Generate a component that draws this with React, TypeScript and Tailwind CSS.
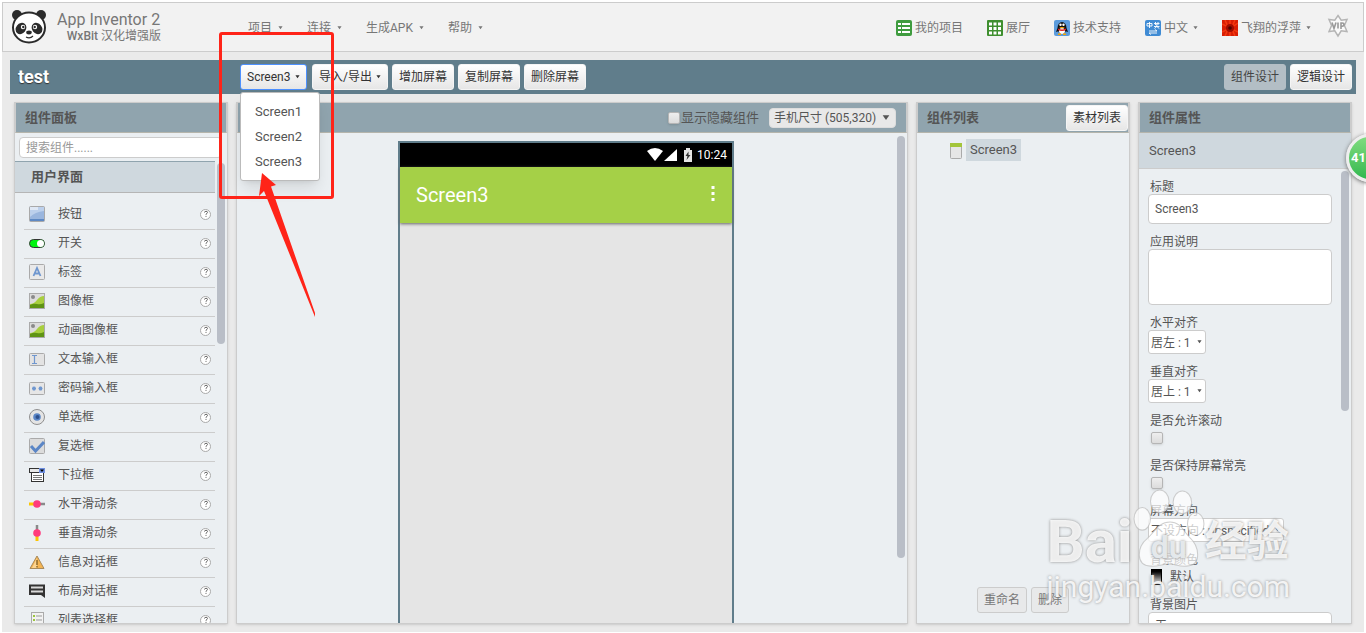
import type { ReactNode } from 'react'
import clsx from 'clsx'

const screens = ['Screen1', 'Screen2', 'Screen3']

const menus = ['项目', '连接', '生成APK', '帮助']

const palette = [
  { name: '按钮', icon: 'button' },
  { name: '开关', icon: 'switch' },
  { name: '标签', icon: 'label' },
  { name: '图像框', icon: 'image' },
  { name: '动画图像框', icon: 'image' },
  { name: '文本输入框', icon: 'textbox' },
  { name: '密码输入框', icon: 'password' },
  { name: '单选框', icon: 'radio' },
  { name: '复选框', icon: 'checkbox' },
  { name: '下拉框', icon: 'spinner' },
  { name: '水平滑动条', icon: 'hslider' },
  { name: '垂直滑动条', icon: 'vslider' },
  { name: '信息对话框', icon: 'notifier' },
  { name: '布局对话框', icon: 'dialog' },
  { name: '列表选择框', icon: 'listpicker' },
]

const paletteIcons: Record<string, ReactNode> = {
  button: (
    <>
      <rect x="0.5" y="0.5" width="15" height="15" rx="1" fill="#9ab6de" stroke="#a9a9a9" />
      <path d="M1 1h14v4Q6 6 1 11z" fill="#bcd0ec" />
      <path d="M1 1h8v3H1z" fill="#dfe8f5" />
      <path d="M1 13h14v2H1z" fill="#5e89c4" />
    </>
  ),
  switch: (
    <>
      <rect x="0.5" y="4.5" width="15" height="8" rx="4" fill="#00f410" stroke="#333" />
      <circle cx="11.5" cy="8.5" r="3.5" fill="#fff" />
    </>
  ),
  label: (
    <>
      <rect x="0.5" y="0.5" width="15" height="15" rx="1" fill="#e9e9e9" stroke="#aaa" />
      <path d="M4.5 12L8 4l3.500 8M5.800 9.500h4.400" fill="none" stroke="#6f97cf" strokeWidth="1.800" />
    </>
  ),
  image: (
    <>
      <rect x="0.5" y="0.5" width="15" height="15" fill="#dcdcdc" stroke="#aaa" />
      <circle cx="4" cy="4" r="2" fill="#8a8a8a" />
      <path d="M1 11Q5 11 8 7t7-4v12H1z" fill="#a8cf3e" />
      <path d="M1 12q4-2 7-1t7-1v5H1z" fill="#5f9414" />
    </>
  ),
  textbox: (
    <>
      <rect x="0.5" y="2.500" width="15" height="12" rx="1" fill="#e3e3e3" stroke="#aaa" />
      <path d="M3 4.500h5M3 12.500h5M5.500 4.500v8" fill="none" stroke="#6f97cf" strokeWidth="1.200" />
    </>
  ),
  password: (
    <>
      <rect x="0.5" y="2.500" width="15" height="12" rx="1" fill="#e6e6e6" stroke="#aaa" />
      <path
        d="M5 6.500v4M3 8.500h4M3.600 7l2.800 3M6.400 7l-2.800 3M11.500 6.500v4M9.500 8.500h4M10.100 7l2.800 3M12.900 7l-2.800 3"
        stroke="#6f97cf"
        strokeWidth="1.100"
      />
    </>
  ),
  radio: (
    <>
      <circle cx="8" cy="8" r="7.500" fill="#e4e4e4" stroke="#8f8f8f" />
      <circle cx="8" cy="8" r="3.800" fill="#5b86c6" />
      <circle cx="8.500" cy="8" r="2" fill="#2c4f8c" />
    </>
  ),
  checkbox: (
    <>
      <rect x="0.5" y="0.5" width="15" height="15" rx="1" fill="#dcdcdc" stroke="#aaa" />
      <path d="M2 8l4.500 5L15 4" fill="none" stroke="#5b86c6" strokeWidth="3" />
    </>
  ),
  spinner: (
    <>
      <rect x="2.500" y="4.500" width="12" height="10" fill="#fff" stroke="#333" />
      <rect x="0.5" y="1.500" width="15" height="4" fill="#e8e8e8" stroke="#333" />
      <rect x="10" y="1" width="6" height="5" fill="#6f8fe0" />
      <path d="M11 2.500h4l-2 2.500z" fill="#000" />
      <path d="M4 8.500h9M4 10.500h9M4 12.500h9" stroke="#777" />
    </>
  ),
  hslider: (
    <>
      <path d="M0 8h8" stroke="#fdc500" strokeWidth="3" />
      <path d="M8 8h8" stroke="#8a8a8a" strokeWidth="2.500" />
      <circle cx="8" cy="8" r="3.800" fill="#ff3b7d" />
    </>
  ),
  vslider: (
    <>
      <path d="M8 0v8" stroke="#8a8a8a" strokeWidth="2.500" />
      <path d="M8 8v8" stroke="#fdc500" strokeWidth="3" />
      <circle cx="8" cy="8" r="3.800" fill="#ff3b7d" />
    </>
  ),
  notifier: (
    <>
      <path d="M8 2l7 12.500H1z" fill="#f5b553" stroke="#a88a5c" strokeLinejoin="round" />
      <path d="M8 4v10H3z" fill="#fbd492" />
      <path d="M8 6v5M8 12v1.500" stroke="#8f6a2b" strokeWidth="1.500" />
    </>
  ),
  dialog: (
    <>
      <path d="M0 1.500h16V15l-4-3H0z" fill="#333" />
      <path d="M2 3.500h12v2H2zM2 7.500h12v2H2z" fill="#d9d9d9" />
    </>
  ),
  listpicker: (
    <>
      <rect x="2.500" y="0.5" width="12" height="15" fill="#f2f2f2" stroke="#aaa" />
      <path d="M4 4h2M4 8h2M4 12h2" stroke="#9bc53d" strokeWidth="2" />
      <path d="M7 4h6M7 8h6M7 12h6" stroke="#999" />
    </>
  ),
}

function Caret({ className }: { className?: string }) {
  return (
    <svg viewBox="0 0 6 4" className={clsx(className ?? 'h-1 w-[5px]', 'shrink-0')} aria-hidden="true">
      <path d="M0.5 0h5L3 3.500z" fill="currentColor" />
    </svg>
  )
}

function Button({ children, className }: { children: ReactNode; className?: string }) {
  return (
    <button
      type="button"
      className={clsx(
        'flex h-[26px] shrink-0 items-center rounded-[3px] border px-1.5 text-xs whitespace-nowrap',
        className ?? 'border-[#f4f4f4] bg-linear-to-b from-white to-[#e6e6e6] text-[#333]'
      )}
    >
      {children}
    </button>
  )
}

function Panel({ title, extra, className, children }: { title?: string; extra?: ReactNode; className: string; children: ReactNode }) {
  return (
    <section className={clsx('flex min-h-0 flex-col overflow-hidden border border-[#ccc] bg-[#ebeff2] shadow-sm', className)}>
      <div className="flex h-[30px] shrink-0 items-center justify-between border-x border-b border-x-[#ccc] border-b-[#b5b5ac] bg-[#90a4ae] pl-[9px]">
        <h2 className="text-[13px] font-bold">{title}</h2>
        {extra}
      </div>
      {children}
    </section>
  )
}

function Scrollbar({ className }: { className: string }) {
  return <div className={clsx('w-2 shrink-0 rounded-full bg-[#b9bec7]', className)} />
}

function Tick({ id }: { id: string }) {
  return (
    <input
      id={id}
      type="checkbox"
      className="block size-3 shrink-0 appearance-none rounded-[2px] border border-[#b5b5b5] bg-linear-to-b from-[#eee] to-[#dcdcdc] shadow-sm"
    />
  )
}

function Field({ id, label, children }: { id: string; label: string; children: ReactNode }) {
  return (
    <div>
      <label htmlFor={id} className="block h-4 pt-px pl-0.5 text-xs leading-4">
        {label}
      </label>
      {children}
    </div>
  )
}

function Select({ id, value, className }: { id: string; value: string; className: string }) {
  return (
    <div className={clsx('relative', className)}>
      <select
        id={id}
        className="block h-6 w-full appearance-none rounded-[3px] border border-[#ccc] bg-white pt-px pr-3 pl-0.5 text-xs"
      >
        <option>{value}</option>
      </select>
      <Caret className="pointer-events-none absolute top-2.5 right-1 h-1 w-[5px]" />
    </div>
  )
}

function Panda() {
  return (
    <svg viewBox="0 0 36 36" className="-mt-0.5 size-9" aria-hidden="true">
      <circle cx="6" cy="6" r="5" fill="#2b2b2b" />
      <circle cx="30" cy="6" r="5" fill="#2b2b2b" />
      <ellipse cx="18" cy="18.500" rx="16" ry="15" fill="#fff" stroke="#2b2b2b" strokeWidth="2" />
      <ellipse cx="10" cy="19.500" rx="5" ry="6" transform="rotate(38 10 19.500)" fill="#2b2b2b" />
      <ellipse cx="26" cy="19.500" rx="5" ry="6" transform="rotate(-38 26 19.500)" fill="#2b2b2b" />
      <circle cx="12" cy="18" r="2.200" fill="#fff" />
      <circle cx="24" cy="18" r="2.200" fill="#fff" />
      <circle cx="12.300" cy="18" r="1.200" fill="#2b2b2b" />
      <circle cx="23.700" cy="18" r="1.200" fill="#2b2b2b" />
      <ellipse cx="18" cy="23.500" rx="2.800" ry="1.900" fill="#2b2b2b" />
      <path d="M15 28q4 2 7-1" fill="none" stroke="#2b2b2b" strokeWidth="1.200" />
    </svg>
  )
}

function HeaderLink({ icon, text, caret }: { icon: ReactNode; text: string; caret?: boolean }) {
  return (
    <a href="#" className="flex items-center gap-[3px] text-xs whitespace-nowrap">
      <svg viewBox="0 0 16 16" className="size-4" aria-hidden="true">
        {icon}
      </svg>
      {text}
      {caret && <Caret className="ml-0.5 h-1 w-[5px]" />}
    </a>
  )
}

function Header() {
  return (
    <header className="flex h-[50px] shrink-0 items-center border border-[#ccc] bg-[#f2f2f2] pt-0.5 pl-2 text-[#777]">
      <Panda />
      <div className="ml-2.5 w-[104px]">
        <h1 className="text-base leading-4 whitespace-nowrap">App Inventor 2</h1>
        <p className="text-right text-xs leading-4 whitespace-nowrap">
          <span className="font-medium">WxBit</span> 汉化增强版
        </p>
      </div>
      <nav className="ml-[87px] flex gap-6">
        {menus.map((m) => (
          <button key={m} type="button" className="flex items-center gap-1.5 text-xs whitespace-nowrap">
            {m}
            <Caret />
          </button>
        ))}
      </nav>
      <nav className="ml-auto flex items-center gap-6 pr-3.5">
        <HeaderLink
          text="我的项目"
          icon={
            <>
              <rect width="16" height="16" rx="2" fill="#3f9c3f" />
              <path d="M2 4h3M2 8h3M2 12h3M6 4h8M6 8h8M6 12h8" stroke="#fff" strokeWidth="2" />
            </>
          }
        />
        <HeaderLink
          text="展厅"
          icon={
            <>
              <rect width="16" height="16" rx="1" fill="#3f8f2f" />
              <path
                d="M2 2.500h3v3H2zM6.500 2.500h3v3h-3zM11 2.500h3v3h-3zM2 7h3v3H2zM6.500 7h3v3h-3zM11 7h3v3h-3zM2 11.500h3v3H2zM6.500 11.500h3v3h-3zM11 11.500h3v3h-3z"
                fill="#fff"
              />
            </>
          }
        />
        <HeaderLink
          text="技术支持"
          icon={
            <>
              <rect width="16" height="16" rx="2" fill="#5b9bdc" />
              <ellipse cx="8" cy="8" rx="4.500" ry="6" fill="#111" />
              <path d="M3.500 8L2 12l3-1zM12.500 8l1.500 4-3-1z" fill="#111" />
              <ellipse cx="8" cy="11" rx="3" ry="3" fill="#fff" />
              <circle cx="6.500" cy="4.800" r="1.200" fill="#fff" />
              <circle cx="9.500" cy="4.800" r="1.200" fill="#fff" />
              <path d="M5 7h6l-3 1.500z" fill="#f5a400" />
              <path d="M4 8.500q4 2 8 0v1.500q-4 2-8 0z" fill="#e02020" />
              <path d="M4 13.500h3v1.500H4zM9 13.500h3v1.500H9z" fill="#f5a400" />
            </>
          }
        />
        <HeaderLink
          caret
          text="中文"
          icon={
            <>
              <rect width="16" height="16" rx="2" fill="#3f8bd4" />
              <path
                d="M2 3.500h5v2.500H2zM4.500 2v6M9 3.500h5.500M10.500 2v3M13 2v3M9 6.500h5.500M11.800 4v2.500L9.500 8.500M11.800 6.500l2.500 2M4 11h8l-2-1.500M12 13H4l2 1.500"
                fill="none"
                stroke="#fff"
                strokeWidth="0.9"
              />
            </>
          }
        />
        <HeaderLink
          caret
          text="飞翔的浮萍"
          icon={
            <>
              <rect width="16" height="16" fill="#d81e05" />
              <path d="M0 4l6 3-3-7M16 3l-6 4 3-7M0 12l6-3-3 7M16 12l-6-3 3 7M8 0v5M8 16v-5" stroke="#f53a10" fill="none" strokeWidth="1.500" />
              <circle cx="8" cy="8" r="4" fill="#a00c00" />
              <circle cx="8" cy="8" r="1.800" fill="#4d0500" />
            </>
          }
        />
        <a href="#" aria-label="VIP" className="-mt-1 -ml-2">
          <svg viewBox="0 0 22 24" className="h-6 w-[22px]" aria-hidden="true">
            <path
              d="M11 1.500l3.200 4.700 5.800-.7-2.600 6 2.600 6-5.800-.7L11 22l-3.200-5.200-5.800.7 2.600-6L2 5.500l5.800.7z"
              fill="#fafafa"
              stroke="#b5b5b5"
              strokeWidth="1.500"
            />
            <path d="M5 8.500l2 6 2-6M11 8.500v6M14 15V9h1.200q1.800 0 1.800 1.600t-1.800 1.600H14" fill="none" stroke="#999" strokeWidth="1.600" />
          </svg>
        </a>
      </nav>
    </header>
  )
}

function Toolbar() {
  return (
    <div className="mx-2 mt-2 flex h-[34px] shrink-0 items-center bg-[#607d8b] pr-1">
      <h2 className="w-[230px] shrink-0 pl-2 text-lg font-bold text-white [text-shadow:0_1px_1px_#333]">test</h2>
      <div className="flex gap-1">
        <div className="relative mr-px w-[67px]">
          <Button className="w-full justify-between border-[#4d90fe] bg-linear-to-b from-white to-[#e6e6e6] text-[#333]">
            Screen3 <Caret />
          </Button>
          <ul className="absolute top-7 left-0 z-10 w-20 rounded-[3px] border border-[#bbb] bg-white py-1.5 shadow-lg">
            {screens.map((s) => (
              <li key={s}>
                <a href="#" className="block pl-3.5 text-[13px] leading-[25px] text-[#555]">
                  {s}
                </a>
              </li>
            ))}
          </ul>
        </div>
        <Button>
          导入/导出 <Caret className="ml-1 h-1 w-[5px]" />
        </Button>
        <Button>增加屏幕</Button>
        <Button>复制屏幕</Button>
        <Button>删除屏幕</Button>
      </div>
      <div className="ml-auto flex gap-1">
        <Button className="border-[#b3bec5] bg-[#b3bec5] text-[#444]">组件设计</Button>
        <Button>逻辑设计</Button>
      </div>
    </div>
  )
}

function Palette() {
  return (
    <Panel title="组件面板" className="w-[214px]">
      <div className="shrink-0 pt-1 pb-[3px] pl-1">
        <input
          type="text"
          aria-label="搜索组件"
          placeholder="搜索组件......"
          className="block h-[21px] w-[203px] rounded-[4px] border border-[#ccc] bg-white px-1.5 text-xs placeholder:text-[#999]"
        />
      </div>
      <div className="flex min-h-0 flex-1 items-start gap-0.5 overflow-hidden">
        <div className="w-[200px]">
          <h3 className="flex h-8 items-center border-y border-t-[#90a4ae] border-b-[#b5b5b5] bg-[#cfd8de] pl-4 text-[13px] font-bold">
            用户界面
          </h3>
          <ul className="pt-2 pl-[9px]">
            {palette.map((p) => (
              <li key={p.name} className="flex h-[29px] items-center border-b border-[#ccc] pb-0.5 pl-[5px]">
                <svg viewBox="0 0 16 16" className="size-4" aria-hidden="true">
                  {paletteIcons[p.icon]}
                </svg>
                <span className="ml-[13px] text-xs">{p.name}</span>
                <button
                  type="button"
                  aria-label="帮助"
                  className="mr-1 ml-auto flex size-[11px] items-center justify-center rounded-full border border-[#aaa] bg-white"
                >
                  <svg viewBox="0 0 8 8" className="size-2" aria-hidden="true">
                    <path d="M2.500 2.500q0-1.200 1.500-1.200t1.500 1.100Q5.500 3.200 4 4.200v.6M4 5.900v1" fill="none" stroke="#666" strokeWidth="1" />
                  </svg>
                </button>
              </li>
            ))}
          </ul>
        </div>
        <Scrollbar className="mt-0.5 h-[181px]" />
      </div>
    </Panel>
  )
}

function Viewer() {
  return (
    <Panel
      className="min-w-0 flex-1"
      extra={
        <div className="mr-2.5 flex items-center">
          <Tick id="hidden" />
          <label htmlFor="hidden" className="ml-px pt-px text-[13px]">
            显示隐藏组件
          </label>
          <div className="relative ml-2.5 w-[127px]">
            <select
              aria-label="手机尺寸"
              className="block h-5 w-full appearance-none rounded-[4px] border border-[#ddd] bg-[#e8e8e8] pl-1 text-xs"
            >
              <option>手机尺寸 (505,320)</option>
            </select>
            <Caret className="pointer-events-none absolute top-[7px] right-1.5 h-1.5 w-2" />
          </div>
        </div>
      }
    >
      <div className="flex min-h-0 flex-1 justify-end gap-1 overflow-hidden pr-0.5">
        <div className="flex flex-1 justify-center overflow-hidden pt-2">
          <div className="ml-0.5 flex w-[336px] flex-col border-2 border-b-0 border-[#607d8b] bg-[#e5e5e5]">
            <div className="flex h-6 shrink-0 items-center justify-end bg-black pr-[5px] text-white">
              <svg viewBox="0 0 50 16" className="h-4 w-[50px]" aria-hidden="true">
                <path d="M0 4q8-6 16 0l-8 10z" fill="#fff" />
                <path d="M30 2v12H17z" fill="#fff" />
                <path d="M37 3h2V1h4v2h2v12h-8z" fill="#e5e5e5" />
                <path d="M41.500 4.500L38.500 9h2l-1 4 4-5h-2z" fill="#333" />
              </svg>
              <span className="text-xs">10:24</span>
            </div>
            <div className="flex h-14 shrink-0 items-center justify-between bg-[#a5d047] pr-[17px] pl-4 text-xl text-white shadow-[0_1px_3px_#666]">
              Screen3
              <svg viewBox="0 0 4 16" className="mb-1 h-4 w-1" aria-hidden="true">
                <path d="M.5 1h3v3h-3zM.5 7h3v3h-3zM.5 13h3v3h-3z" fill="#fff" />
              </svg>
            </div>
          </div>
        </div>
        <Scrollbar className="mt-[3px] h-[422px]" />
      </div>
    </Panel>
  )
}

function ComponentTree() {
  const disabled = 'border-[#ccc] bg-[#e8e9ea] text-[#777]'
  return (
    <Panel title="组件列表" className="w-[214px]" extra={<Button>素材列表</Button>}>
      <div className="flex flex-1 items-start gap-1 pt-1.5 pl-[33px]">
        <svg viewBox="0 0 12 16" className="mt-1 h-4 w-3" aria-hidden="true">
          <rect x="0.5" y="0.5" width="11" height="15" rx="1" fill="#e6e6e6" stroke="#aaa" />
          <path d="M0 0h12v4H0z" fill="#a3c53a" />
        </svg>
        <span className="bg-[#cfd8de] px-1 text-[13px] leading-[22px]">Screen3</span>
      </div>
      <div className="flex justify-center gap-1 pb-2.5">
        <Button className={disabled}>重命名</Button>
        <Button className={disabled}>删除</Button>
      </div>
    </Panel>
  )
}

function Properties() {
  const box = 'block w-full resize-none rounded-[4px] border border-[#ccc] bg-white px-1.5 text-xs'
  return (
    <Panel title="组件属性" className="w-[214px]">
      <h3 className="h-9 shrink-0 border-b border-[#ccc] bg-[#cfd8de] pl-2.5 text-[13px] leading-[35px]">Screen3</h3>
      <div className="flex min-h-0 flex-1 items-start gap-[9px] overflow-hidden pr-0.5 pl-[9px]">
        <div className="flex flex-1 flex-col gap-[9px] pt-[9px]">
          <Field id="title" label="标题">
            <input id="title" type="text" defaultValue="Screen3" className={clsx(box, 'h-[30px]')} />
          </Field>
          <Field id="about" label="应用说明">
            <textarea id="about" className={clsx(box, 'h-14')} />
          </Field>
          <Field id="halign" label="水平对齐">
            <Select id="halign" value="居左 : 1" className="w-[58px]" />
          </Field>
          <Field id="valign" label="垂直对齐">
            <Select id="valign" value="居上 : 1" className="w-[58px]" />
          </Field>
          <Field id="scrollable" label="是否允许滚动">
            <div className="py-1 pl-[3px]">
              <Tick id="scrollable" />
            </div>
          </Field>
          <Field id="keepon" label="是否保持屏幕常亮">
            <div className="py-1 pl-[3px]">
              <Tick id="keepon" />
            </div>
          </Field>
          <Field id="orientation" label="屏幕方向">
            <Select id="orientation" value="不设方向 : unspecified" className="w-[136px]" />
          </Field>
          <Field id="bgcolor" label="背景颜色">
            <button id="bgcolor" type="button" className="flex h-5 items-center gap-2 pl-[3px] text-xs">
              <span className="h-4 w-[11px] border border-black bg-linear-to-b from-black to-white" />
              默认
            </button>
          </Field>
          <Field id="bgimage" label="背景图片">
            <input id="bgimage" type="text" defaultValue="无" className={clsx(box, 'h-6')} />
          </Field>
        </div>
        <Scrollbar className="mt-0.5 h-60" />
      </div>
    </Panel>
  )
}

// red frame and arrow that point at the screen list
function Annotation() {
  return (
    <div className="pointer-events-none absolute top-8 left-[219px] z-20 h-[167px] w-[115px] rounded-[3px] border-3 border-[#ff2419]">
      <svg viewBox="0 0 62 146" className="absolute top-[136px] left-[31px] h-[146px] w-[62px]" aria-hidden="true">
        <path d="M9 2L23 14l-5 1.500L63 145l-1 1L11 20l-5 5z" fill="#ff2419" />
      </svg>
    </div>
  )
}

function Watermark() {
  return (
    <div className="pointer-events-none absolute right-[76px] bottom-[30px] z-20 text-white/85 [text-shadow:0_0_3px_#888]">
      <div className="mb-1 flex items-end">
        <span className="text-[60px] leading-[50px] font-bold">Bai</span>
        <div className="relative flex h-[78px] w-[72px] items-end justify-center">
          <svg viewBox="0 0 70 78" className="absolute inset-0" aria-hidden="true">
            <g fill="#fff" fillOpacity="0.7" stroke="#bbb" strokeOpacity="0.7">
              <ellipse cx="9" cy="29" rx="8" ry="11" />
              <ellipse cx="26" cy="12" rx="9" ry="11" />
              <ellipse cx="48" cy="13" rx="9" ry="11" />
              <ellipse cx="61" cy="34" rx="8" ry="11" />
              <path d="M36 32c10 0 13 9 19 15 9 8 13 27-3 28-7 1-10-2-17-2s-12 3-18 2C2 74 4 56 14 48c7-6 11-16 22-16z" />
            </g>
          </svg>
          <span className="relative text-[32px] leading-10 font-bold text-[#e4e8eb]">du</span>
        </div>
        <span className="text-[42px] leading-[50px] font-bold">经验</span>
      </div>
      <p className="text-[30px] leading-8 whitespace-nowrap">jingyan.baidu.com</p>
    </div>
  )
}

export default function App() {
  return (
    <div className="relative h-screen overflow-hidden bg-white px-0.5 pt-0.5 pb-px font-[Roboto,'Noto_Sans_CJK_SC',sans-serif] text-[#555]">
      <div className="flex h-full flex-col bg-[#eaeaea]">
        <Header />
        <Toolbar />
        <main className="flex min-h-0 flex-1 gap-2 px-3 py-2">
          <Palette />
          <Viewer />
          <ComponentTree />
          <Properties />
        </main>
      </div>
      <Annotation />
      <Watermark />
      <div className="absolute top-[134px] -right-7 z-20 flex size-12 items-center rounded-full border-3 border-[#eee] bg-linear-to-b from-[#7fdc7f] to-[#2fb84f] pl-0.5 text-[13px] font-bold text-white shadow-[0_1px_4px_#666]">
        41
      </div>
    </div>
  )
}
